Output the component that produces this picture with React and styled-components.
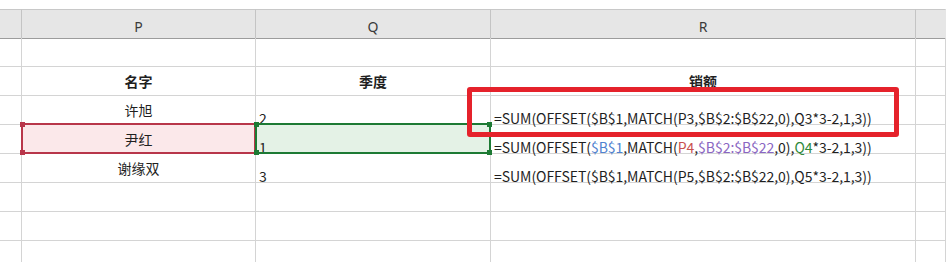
import React from 'react';
import styled, { createGlobalStyle } from 'styled-components';

const GlobalStyle = createGlobalStyle`
  html, body {
    margin: 0;
    padding: 0;
    background: #fff;
  }
  body {
    font-family: "Noto Sans CJK SC", "Noto Sans", sans-serif;
    color: #1f1f1f;
  }
`;

const Sheet = styled.div`
  position: relative;
  width: 946px;
  height: 262px;
  overflow: hidden;
  padding-top: 9px;
  box-sizing: border-box;
  background: #fff;
`;

const Grid = styled.div`
  display: grid;
  grid-template-columns: 22px 234px 235px 425px 1fr;
  grid-auto-rows: 29px;
`;

const HeadCell = styled.div`
  height: 30px;
  box-sizing: border-box;
  border-top: 1px solid #c8c8c8;
  border-bottom: 1px solid #9c9c9c;
  border-right: 1px solid ${(p) => (p.$last ? 'transparent' : '#c4c4c4')};
  background: #e6e6e6;
  display: flex;
  align-items: center;
  justify-content: center;
  font-family: "Noto Sans", "Liberation Sans", sans-serif;
  font-size: 14px;
  line-height: 14px;
  color: #3a3a3a;
  padding-top: 6px;
`;

const Cell = styled.div`
  position: ${(p) => (p.$selected ? 'relative' : 'static')};
  box-sizing: border-box;
  border-right: 1px solid #d4d4d4;
  border-bottom: 1px solid #d4d4d4;
  background: ${(p) => p.$fill || 'transparent'};
  display: flex;
  white-space: nowrap;
  font-size: 14px;
  line-height: ${(p) => (p.$bottom ? '12px' : '18px')};
  align-items: ${(p) => (p.$bottom ? 'flex-end' : 'center')};
  justify-content: ${(p) => (p.$center ? 'center' : 'flex-start')};
  padding: ${(p) => (p.$bottom ? '0 0 0 3px' : '0')};
  font-weight: ${(p) => (p.$bold ? 700 : 400)};
`;

const Formula = styled.span`
  font-family: "Noto Sans CJK SC", "Noto Sans", sans-serif;
  font-size: 14px;
  letter-spacing: -0.05px;
`;

const Ref = styled.span`
  color: ${(p) => p.$color};
`;

const Selection = styled.div`
  position: absolute;
  left: -1px;
  right: -1px;
  top: -2px;
  bottom: -1px;
  border: 2px solid ${(p) => p.$color};
  pointer-events: none;
`;

const Handle = styled.span`
  position: absolute;
  width: 5px;
  height: 5px;
  background: ${(p) => p.$color};
  ${(p) => (p.$top ? 'top: -3px;' : 'bottom: -3px;')}
  ${(p) => (p.$left ? 'left: -3px;' : 'right: -3px;')}
`;

const Callout = styled.div`
  position: absolute;
  left: 467px;
  top: 87px;
  width: 432px;
  height: 50px;
  box-sizing: border-box;
  border: 5px solid #e5222b;
  border-radius: 3px;
`;

const columns = ['', 'P', 'Q', 'R', ''];

const rows = [
  {},
  { header: true },
  { name: '许旭', qty: '2', row: 3 },
  { name: '尹红', qty: '1', row: 4, active: true },
  { name: '谢缘双', qty: '3', row: 5 },
  {},
  {},
  {},
];

const RED = '#b8364a';
const GREEN = '#1d7a34';

function FormulaText({ row, active }) {
  if (!active) {
    return (
      <Formula>
        =SUM(OFFSET($B$1,MATCH(P{row},$B$2:$B$22,0),Q{row}*3-2,1,3))
      </Formula>
    );
  }
  return (
    <Formula>
      =SUM(OFFSET(<Ref $color="#4f82cf">$B$1</Ref>,MATCH(
      <Ref $color="#c9504f">P{row}</Ref>,
      <Ref $color="#8a66c2">$B$2:$B$22</Ref>,0),
      <Ref $color="#2f8a3b">Q{row}</Ref>*3-2,1,3))
    </Formula>
  );
}

function Corners({ color, left = true, right = true }) {
  return (
    <>
      {left && <Handle $color={color} $top $left />}
      {left && <Handle $color={color} $left />}
      {right && <Handle $color={color} $top />}
      {right && <Handle $color={color} />}
    </>
  );
}

export default function App() {
  return (
    <>
      <GlobalStyle />
      <Sheet>
        <Grid>
          {columns.map((c, i) => (
            <HeadCell key={i} $last={i === columns.length - 1}>
              {c}
            </HeadCell>
          ))}
          {rows.map((r, i) => {
            if (r.header) {
              return (
                <React.Fragment key={i}>
                  <Cell />
                  <Cell $center $bold>名字</Cell>
                  <Cell $center $bold>季度</Cell>
                  <Cell $center $bold>销额</Cell>
                  <Cell />
                </React.Fragment>
              );
            }
            return (
              <React.Fragment key={i}>
                <Cell />
                <Cell
                  $center
                  $selected={r.active}
                  $fill={r.active ? '#fbe8ea' : undefined}
                >
                  {r.name}
                  {r.active && (
                    <Selection $color={RED}>
                      <Corners color={RED} right={false} />
                    </Selection>
                  )}
                </Cell>
                <Cell
                  $bottom
                  $selected={r.active}
                  $fill={r.active ? '#e4f2e6' : undefined}
                >
                  {r.qty}
                  {r.active && (
                    <Selection $color={GREEN}>
                      <Corners color={GREEN} />
                    </Selection>
                  )}
                </Cell>
                <Cell $bottom>
                  {r.row && <FormulaText row={r.row} active={r.active} />}
                </Cell>
                <Cell />
              </React.Fragment>
            );
          })}
        </Grid>
        <Callout />
      </Sheet>
    </>
  );
}
